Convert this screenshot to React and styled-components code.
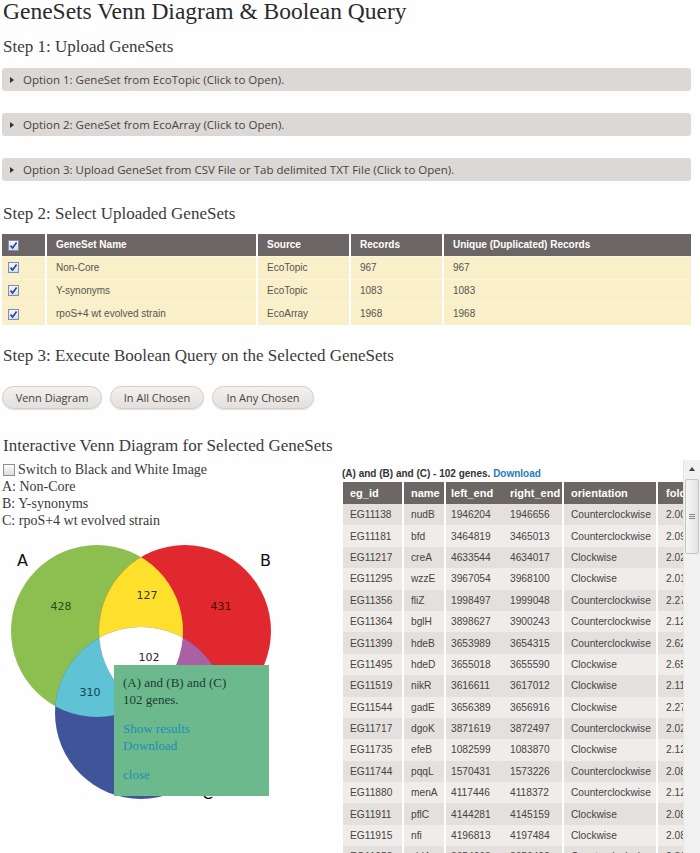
import React from 'react'
import styled, { createGlobalStyle } from 'styled-components'

const GlobalStyle = createGlobalStyle`
  html, body {
    margin: 0;
    height: 853px;
    overflow: hidden;
    background: #fefefe;
  }
`

const options = [
  'Option 1: GeneSet from EcoTopic (Click to Open).',
  'Option 2: GeneSet from EcoArray (Click to Open).',
  'Option 3: Upload GeneSet from CSV File or Tab delimited TXT File (Click to Open).',
]

const genesets = [
  ['Non-Core', 'EcoTopic', '967', '967'],
  ['Y-synonyms', 'EcoTopic', '1083', '1083'],
  ['rpoS+4 wt evolved strain', 'EcoArray', '1968', '1968'],
]

const genes = [
  ['EG11138', 'nudB', '1946204', '1946656', 'Counterclockwise', '2.00'],
  ['EG11181', 'bfd', '3464819', '3465013', 'Counterclockwise', '2.09'],
  ['EG11217', 'creA', '4633544', '4634017', 'Clockwise', '2.02'],
  ['EG11295', 'wzzE', '3967054', '3968100', 'Clockwise', '2.01'],
  ['EG11356', 'fliZ', '1998497', '1999048', 'Counterclockwise', '2.27'],
  ['EG11364', 'bglH', '3898627', '3900243', 'Counterclockwise', '2.12'],
  ['EG11399', 'hdeB', '3653989', '3654315', 'Counterclockwise', '2.62'],
  ['EG11495', 'hdeD', '3655018', '3655590', 'Clockwise', '2.65'],
  ['EG11519', 'nikR', '3616611', '3617012', 'Clockwise', '2.11'],
  ['EG11544', 'gadE', '3656389', '3656916', 'Clockwise', '2.27'],
  ['EG11717', 'dgoK', '3871619', '3872497', 'Counterclockwise', '2.02'],
  ['EG11735', 'efeB', '1082599', '1083870', 'Clockwise', '2.12'],
  ['EG11744', 'pqqL', '1570431', '1573226', 'Counterclockwise', '2.08'],
  ['EG11880', 'menA', '4117446', '4118372', 'Counterclockwise', '2.12'],
  ['EG11911', 'pflC', '4144281', '4145159', 'Clockwise', '2.08'],
  ['EG11915', 'nfi', '4196813', '4197484', 'Clockwise', '2.08'],
  ['EG11958', 'yhjA', '3654963', '3656402', 'Counterclockwise', '2.31'],
]

const geneCols = [
  { label: 'eg_id', width: 60, pad: 7 },
  { label: 'name', width: 42, pad: 7 },
  { label: 'left_end', width: 60, pad: 5, noBorder: true },
  { label: 'right_end', width: 58, pad: 5 },
  { label: 'orientation', width: 94, pad: 7 },
  { label: 'fold', width: 60, pad: 8 },
]

const CheckMark = () => (
  <svg width="9" height="9" viewBox="0 0 9 9">
    <path d="M1.5 4.6 L3.6 7 L7.6 1.6" fill="none" stroke="#2a3f8f" strokeWidth="1.6" />
  </svg>
)

const App = () => {
  return (
    <Page>
      <GlobalStyle />
      <Title>GeneSets Venn Diagram &amp; Boolean Query</Title>

      <StepHeading $top={0}>Step 1: Upload GeneSets</StepHeading>
      <Accordions>
        {options.map(o => (
          <AccordionBar key={o}>
            <Arrow />
            {o}
          </AccordionBar>
        ))}
      </Accordions>

      <StepHeading $top={23}>Step 2: Select Uploaded GeneSets</StepHeading>
      <SetTable>
        <thead>
          <tr>
            <SetHead $w={44}><Check><CheckMark /></Check></SetHead>
            <SetHead $w={211}>GeneSet Name</SetHead>
            <SetHead $w={93}>Source</SetHead>
            <SetHead $w={93}>Records</SetHead>
            <SetHead>Unique (Duplicated) Records</SetHead>
          </tr>
        </thead>
        <tbody>
          {genesets.map(r => (
            <tr key={r[0]}>
              <SetCell><Check><CheckMark /></Check></SetCell>
              {r.map((c, i) => <SetCell key={i}>{c}</SetCell>)}
            </tr>
          ))}
        </tbody>
      </SetTable>

      <StepHeading $top={21}>Step 3: Execute Boolean Query on the Selected GeneSets</StepHeading>
      <ButtonRow>
        <QueryButton $w={100}>Venn Diagram</QueryButton>
        <QueryButton $w={94}>In All Chosen</QueryButton>
        <QueryButton $w={102}>In Any Chosen</QueryButton>
      </ButtonRow>

      <StepHeading $top={27}>Interactive Venn Diagram for Selected GeneSets</StepHeading>

      <Columns>
        <LeftCol>
          <Legend>
            <SwitchLine><PlainBox />Switch to Black and White Image</SwitchLine>
            <div>A: Non-Core</div>
            <div>B: Y-synonyms</div>
            <div>C: rpoS+4 wt evolved strain</div>
          </Legend>
          <VennWrap>
            <svg width="338" height="330" viewBox="0 530 338 330">
              <defs>
                <clipPath id="clipA"><circle cx="97" cy="632" r="86" /></clipPath>
                <clipPath id="clipB"><circle cx="185" cy="632" r="86" /></clipPath>
              </defs>
              <circle cx="97" cy="632" r="86" fill="#8cbf50" />
              <circle cx="185" cy="632" r="86" fill="#e2282f" />
              <circle cx="141" cy="714" r="86" fill="#405599" />
              <g clipPath="url(#clipA)">
                <circle cx="185" cy="632" r="86" fill="#fde02b" />
                <circle cx="141" cy="714" r="86" fill="#60c2d5" />
              </g>
              <g clipPath="url(#clipB)">
                <circle cx="141" cy="714" r="86" fill="#a960a4" />
              </g>
              <g clipPath="url(#clipA)">
                <g clipPath="url(#clipB)">
                  <circle cx="141" cy="714" r="86" fill="#ffffff" />
                </g>
              </g>
              <g fontFamily="'DejaVu Sans', sans-serif" fontSize="11" textAnchor="middle">
                <text x="61" y="611" fill="#2c4a17">428</text>
                <text x="147" y="600" fill="#333">127</text>
                <text x="221" y="611" fill="#4c0910">431</text>
                <text x="149" y="662" fill="#222">102</text>
                <text x="90" y="697" fill="#0c4756">310</text>
              </g>
              <g fontFamily="'DejaVu Sans', sans-serif" fontSize="16" fill="#111">
                <text x="17" y="567">A</text>
                <text x="260" y="567">B</text>
                <text x="202" y="800">C</text>
              </g>
            </svg>
            <Popup>
              <PopupPara>(A) and (B) and (C)<br />102 genes.</PopupPara>
              <PopupPara>
                <PopupLink>Show results</PopupLink><br />
                <PopupLink>Download</PopupLink>
              </PopupPara>
              <PopupPara><PopupLink>close</PopupLink></PopupPara>
            </Popup>
          </VennWrap>
        </LeftCol>

        <ScrollBox>
          <ScrollContent>
            <Caption>(A) and (B) and (C) - 102 genes. <CaptionLink>Download</CaptionLink></Caption>
            <GeneTable>
              <thead>
                <tr>
                  {geneCols.map(c => (
                    <GeneHead key={c.label} $w={c.width} $pad={c.pad} $noBorder={c.noBorder}>{c.label}</GeneHead>
                  ))}
                </tr>
              </thead>
              <tbody>
                {genes.map((g, i) => (
                  <GeneRow key={g[0]} $odd={i % 2 === 0}>
                    {g.map((v, j) => (
                      <GeneCell key={j} $pad={geneCols[j].pad} $noBorder={geneCols[j].noBorder}>{v}</GeneCell>
                    ))}
                  </GeneRow>
                ))}
              </tbody>
            </GeneTable>
          </ScrollContent>
          <Scrollbar>
            <ScrollArrow />
            <Thumb><Grip /></Thumb>
          </Scrollbar>
        </ScrollBox>
      </Columns>
    </Page>
  )
}

export default App

const Page = styled.div`
  padding-left: 2px;
  font-family: "Liberation Serif", serif;
`

const Title = styled.h1`
  margin: 0 0 14px 1px;
  font-size: 23.5px;
  line-height: 23px;
  font-weight: normal;
  color: #2a2a2a;
`

const StepHeading = styled.h2`
  margin: ${p => p.$top}px 0 0 1px;
  font-size: 17px;
  line-height: 20px;
  font-weight: normal;
  color: #3b3b3b;
`

const Accordions = styled.div`
  display: flex;
  flex-direction: column;
  gap: 22px;
  margin: 11px 9px 0 0;
`

const AccordionBar = styled.div`
  height: 23px;
  display: flex;
  align-items: center;
  background: #dcd8d6;
  border-radius: 3px;
  font-family: "Open Sans", sans-serif;
  font-size: 11.5px;
  color: #444;
  padding-left: 8px;
`

const Arrow = styled.span`
  width: 0;
  height: 0;
  border-top: 3px solid transparent;
  border-bottom: 3px solid transparent;
  border-left: 4px solid #333;
  margin-right: 9px;
`

const SetTable = styled.table`
  width: 689px;
  margin-top: 10px;
  border-collapse: collapse;
  table-layout: fixed;
  font-family: "Liberation Sans", Arial, sans-serif;
  font-size: 10px;
`

const SetHead = styled.th`
  ${p => p.$w && `width: ${p.$w}px;`}
  box-sizing: border-box;
  height: 22px;
  padding: 0 0 0 9px;
  background: #6b6665;
  color: #fff;
  font-weight: bold;
  text-align: left;
  border-right: 2px solid #fff;
  &:first-child { padding-left: 6px; }
  &:last-child { border-right: none; }
`

const SetCell = styled.td`
  height: 23px;
  box-sizing: border-box;
  padding: 0 0 0 9px;
  background: #f9efc9;
  color: #555;
  border-right: 2px solid #fff;
  border-top: 1px solid #fbf5dc;
  &:first-child { padding-left: 6px; }
  &:last-child { border-right: none; }
`

const Check = styled.span`
  display: inline-flex;
  align-items: center;
  justify-content: center;
  width: 11px;
  height: 11px;
  box-sizing: border-box;
  border: 1px solid #7c8fb3;
  background: linear-gradient(#f5f7fc, #d6deee);
  vertical-align: middle;
`

const ButtonRow = styled.div`
  display: flex;
  gap: 8px;
  margin-top: 20px;
`

const QueryButton = styled.div`
  width: ${p => p.$w}px;
  height: 23px;
  box-sizing: border-box;
  display: flex;
  align-items: center;
  justify-content: center;
  border: 1px solid #d2cdc9;
  border-radius: 12px;
  background: linear-gradient(#f4f1ef, #e3dfdc);
  box-shadow: 0 1px 1px rgba(0, 0, 0, 0.12);
  font-family: "Open Sans", sans-serif;
  font-size: 11px;
  color: #444;
`

const Columns = styled.div`
  display: flex;
  margin-top: 4px;
`

const LeftCol = styled.div`
  width: 338px;
  padding-top: 1px;
`

const Legend = styled.div`
  font-size: 14px;
  line-height: 17px;
  color: #3a3a3a;
`

const SwitchLine = styled.div`
  display: flex;
  align-items: center;
  gap: 3px;
`

const PlainBox = styled.span`
  width: 12px;
  height: 12px;
  box-sizing: border-box;
  border: 1px solid #8f8f8f;
  background: linear-gradient(#fdfdfd, #dcdcdc);
  margin-left: 1px;
`

const VennWrap = styled.div`
  position: relative;
  margin-left: -2px;
  svg { display: block; }
`

const Popup = styled.div`
  position: absolute;
  left: 114px;
  top: 136px;
  width: 155px;
  height: 131px;
  box-sizing: border-box;
  padding: 9px 8px 0 9px;
  background: #6cb98e;
  font-family: "Liberation Serif", serif;
  font-size: 13px;
  line-height: 17px;
  color: #1f3b2f;
`

const PopupPara = styled.p`
  margin: 0 0 12px;
`

const PopupLink = styled.span`
  color: #1f8db5;
`

const ScrollBox = styled.div`
  flex: 1;
  height: 400px;
  display: flex;
  overflow: hidden;
`

const ScrollContent = styled.div`
  flex: 1;
  overflow: hidden;
  padding: 5px 0 0 2px;
`

const Caption = styled.div`
  font-family: "Liberation Sans", Arial, sans-serif;
  font-size: 10px;
  font-weight: bold;
  line-height: 17px;
  color: #333;
  white-space: nowrap;
`

const CaptionLink = styled.span`
  color: #2a7bba;
`

const GeneTable = styled.table`
  border-collapse: collapse;
  table-layout: fixed;
  width: 374px;
  margin-left: 1px;
  font-family: "Liberation Sans", Arial, sans-serif;
  font-size: 10.2px;
  white-space: nowrap;
`

const GeneHead = styled.th`
  width: ${p => p.$w}px;
  height: 22px;
  padding: 0 0 0 ${p => p.$pad}px;
  box-sizing: border-box;
  background: #6c6765;
  color: #fff;
  font-weight: bold;
  font-size: 11px;
  text-align: left;
  border-right: ${p => (p.$noBorder ? 'none' : '2px solid #fff')};
  overflow: hidden;
`

const GeneRow = styled.tr`
  background: ${p => (p.$odd ? '#e4e0de' : '#efecea')};
`

const GeneCell = styled.td`
  height: 21.4px;
  padding: 0 0 0 ${p => p.$pad}px;
  box-sizing: border-box;
  color: #444;
  border-right: ${p => (p.$noBorder ? 'none' : '2px solid #fff')};
  overflow: hidden;
`

const Scrollbar = styled.div`
  width: 16px;
  flex-shrink: 0;
  background: #f1f1f1;
  border-left: 1px solid #e4e4e4;
  display: flex;
  flex-direction: column;
  align-items: center;
`

const ScrollArrow = styled.div`
  margin-top: 7px;
  width: 0;
  height: 0;
  border-left: 3px solid transparent;
  border-right: 3px solid transparent;
  border-bottom: 4px solid #444;
  margin-bottom: 8px;
`

const Thumb = styled.div`
  width: 14px;
  height: 75px;
  box-sizing: border-box;
  border: 1px solid #c4c4c4;
  border-radius: 2px;
  background: linear-gradient(90deg, #f6f6f6, #e3e3e3);
  display: flex;
  align-items: center;
  justify-content: center;
`

const Grip = styled.div`
  width: 6px;
  height: 5px;
  border-top: 1px solid #888;
  border-bottom: 1px solid #888;
  box-sizing: border-box;
  position: relative;
  &::after {
    content: '';
    position: absolute;
    left: 0;
    right: 0;
    top: 1px;
    border-top: 1px solid #888;
  }
`
